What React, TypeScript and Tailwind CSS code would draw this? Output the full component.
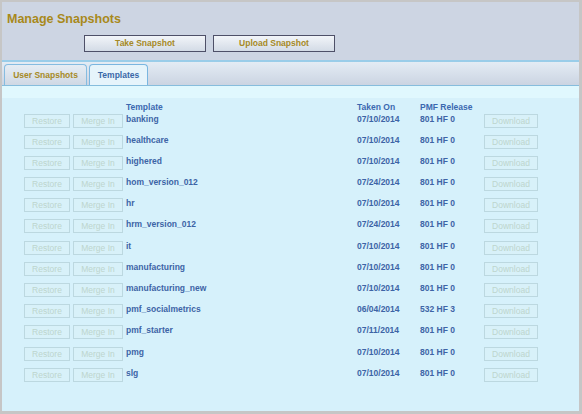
import React from "react";

type Snapshot = {
  name: string;
  takenOn: string;
  release: string;
};

const templates: Snapshot[] = [
  { name: "banking", takenOn: "07/10/2014", release: "801 HF 0" },
  { name: "healthcare", takenOn: "07/10/2014", release: "801 HF 0" },
  { name: "highered", takenOn: "07/10/2014", release: "801 HF 0" },
  { name: "hom_version_012", takenOn: "07/24/2014", release: "801 HF 0" },
  { name: "hr", takenOn: "07/10/2014", release: "801 HF 0" },
  { name: "hrm_version_012", takenOn: "07/24/2014", release: "801 HF 0" },
  { name: "it", takenOn: "07/10/2014", release: "801 HF 0" },
  { name: "manufacturing", takenOn: "07/10/2014", release: "801 HF 0" },
  { name: "manufacturing_new", takenOn: "07/10/2014", release: "801 HF 0" },
  { name: "pmf_socialmetrics", takenOn: "06/04/2014", release: "532 HF 3" },
  { name: "pmf_starter", takenOn: "07/11/2014", release: "801 HF 0" },
  { name: "pmg", takenOn: "07/10/2014", release: "801 HF 0" },
  { name: "slg", takenOn: "07/10/2014", release: "801 HF 0" },
];

const DisabledButton = ({ label, width }: { label: string; width: string }) => (
  <div
    className={`${width} h-[14px] shrink-0 border border-[#bcd8e0] bg-[#d8f1f9] text-[#bdd5cd] text-[8.5px] leading-[12px] font-normal text-center`}
  >
    {label}
  </div>
);

const HeaderButton = ({ label }: { label: string }) => (
  <button className="w-[122px] h-[17px] border border-[#4e5068] bg-gradient-to-b from-[#f2f5f9] to-[#d3dbe6] text-[#a68a26] text-[8.5px] leading-[15px] font-bold">
    {label}
  </button>
);

export default function App() {
  return (
    <div className="w-[582px] h-[414px] border-t-2 border-l-2 border-r-[3px] border-b-[3px] border-[#c6c6c6] flex flex-col font-['Liberation_Sans',Arial,sans-serif] font-bold">
      {/* header */}
      <div className="h-[58px] bg-[#cdd5e3] shrink-0">
        <div className="pl-[5px] pt-[10px] text-[12.5px] leading-[14px] text-[#a8891b]">Manage Snapshots</div>
        <div className="flex gap-[7px] pl-[82px] mt-[9px]">
          <HeaderButton label="Take Snapshot" />
          <HeaderButton label="Upload Snapshot" />
        </div>
      </div>

      {/* tabs */}
      <div className="h-[26px] shrink-0 border-t-2 border-[#9acde9] border-b border-b-[#86bddd] bg-gradient-to-b from-[#e4ecf4] to-[#cbd4e2] flex items-end gap-[2px] pl-[2px]">
        <div className="w-[83px] h-[21px] rounded-t-[4px] border border-b-0 border-[#86bce0] bg-gradient-to-b from-[#e6edf4] to-[#cfd8e4] text-[#a68a26] text-[8.5px] leading-[20px] text-center">
          User Snapshots
        </div>
        <div className="w-[59px] h-[21px] rounded-t-[4px] border border-b-0 border-[#7ab6e0] bg-[#e6f4fb] text-[#3a68a8] text-[8.5px] leading-[20px] text-center">
          Templates
        </div>
      </div>

      {/* content */}
      <div className="flex-1 bg-[#d6f1fb] flex flex-col">
        <div className="h-[12px] bg-[#e0f8fe] shrink-0" />
        <div className="flex pt-[3.5px] h-[14.5px] text-[8.5px] leading-[10px] text-[#3b68b0]">
          <div className="w-[124px] shrink-0" />
          <div className="w-[231px] shrink-0">Template</div>
          <div className="w-[63px] shrink-0">Taken On</div>
          <div className="w-[64px] shrink-0">PMF Release</div>
        </div>
        <div className="flex flex-col">
          {templates.map((t) => (
            <div key={t.name} className="flex items-start h-[21.2px] pt-[1px] text-[8.5px] leading-[10px] text-[#3d64a6]">
              <div className="w-[22px] shrink-0" />
              <DisabledButton label="Restore" width="w-[46px]" />
              <div className="w-[3px] shrink-0" />
              <DisabledButton label="Merge In" width="w-[50px]" />
              <div className="w-[3px] shrink-0" />
              <div className="w-[231px] shrink-0">{t.name}</div>
              <div className="w-[63px] shrink-0">{t.takenOn}</div>
              <div className="w-[64px] shrink-0">{t.release}</div>
              <DisabledButton label="Download" width="w-[54px]" />
            </div>
          ))}
        </div>
      </div>
    </div>
  );
}
